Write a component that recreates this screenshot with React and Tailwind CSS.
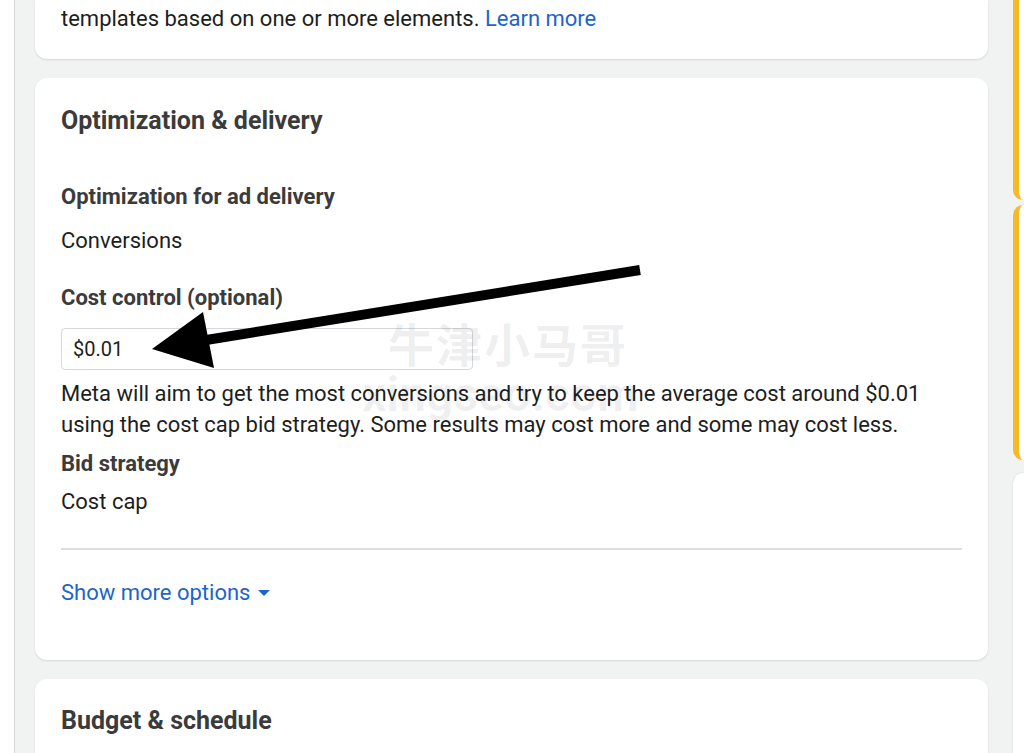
import React from "react";

const font = { fontFamily: "Roboto, 'Noto Sans CJK SC', sans-serif" };

export default function App() {
  return (
    <div className="relative h-[753px] w-[1024px] overflow-hidden bg-[#f1f2f2] flex" style={font}>
      {/* left strip */}
      <div className="w-[15px] shrink-0 bg-white border-r border-[#d7d9dc]" />

      {/* main column */}
      <div className="w-[973px] shrink-0 pl-[20px] flex flex-col gap-[19px]">
        {/* card 1 (top cut) */}
        <div className="bg-white rounded-b-[12px] shadow-[0_1px_2px_rgba(0,0,0,0.12)] pl-[26px] pt-[4px] h-[59px] shrink-0">
          <p className="text-[22px] leading-[30px] text-[#1c1e21]">
            templates based on one or more elements. <span className="text-[#1d65c9]">Learn more</span>
          </p>
        </div>

        {/* card 2 */}
        <div className="bg-white rounded-[12px] shadow-[0_1px_2px_rgba(0,0,0,0.12)] pl-[26px] pr-[26px] pt-[28px] h-[582px] shrink-0 flex flex-col">
          <h2 className="text-[25px] leading-[30px] font-bold text-[#3b3b3b]">Optimization &amp; delivery</h2>
          <h3 className="mt-[46px] text-[22px] leading-[30px] font-bold text-[#3b3b3b]">Optimization for ad delivery</h3>
          <p className="mt-[14px] text-[22px] leading-[30px] text-[#1c1e21]">Conversions</p>
          <h3 className="mt-[27px] text-[22px] leading-[30px] font-bold text-[#3b3b3b]">Cost control (optional)</h3>
          <div className="mt-[15px] w-[412px] h-[42px] border border-[#d4d7db] rounded-[4px] flex items-center px-[11px] text-[20px] text-[#1c1e21]">
            $0.01
          </div>
          <p className="mt-[8px] text-[22px] leading-[31px] text-[#1c1e21] whitespace-nowrap">
            Meta will aim to get the most conversions and try to keep the average cost around $0.01
            <br />
            using the cost cap bid strategy. Some results may cost more and some may cost less.
          </p>
          <h3 className="mt-[9px] text-[22px] leading-[30px] font-bold text-[#3b3b3b]">Bid strategy</h3>
          <p className="mt-[8px] text-[22px] leading-[30px] text-[#1c1e21]">Cost cap</p>
          <div className="mt-[31px] h-[2px] bg-[#dadde1]" />
          <div className="mt-[28px] flex items-center gap-[8px] text-[22px] leading-[30px] text-[#1d65c9]">
            <span>Show more options</span>
            <svg width="12" height="7" viewBox="0 0 12 7"><path d="M0 0 L12 0 L6 6 Z" fill="#1d65c9" /></svg>
          </div>
        </div>

        {/* card 3 */}
        <div className="bg-white rounded-t-[12px] shadow-[0_1px_2px_rgba(0,0,0,0.12)] pl-[26px] pt-[27px] h-[120px] shrink-0">
          <h2 className="text-[25px] leading-[30px] font-bold text-[#3b3b3b]">Budget &amp; schedule</h2>
        </div>
      </div>

      {/* right column */}
      <div className="ml-[25px] w-[60px] shrink-0 flex flex-col gap-[5px]">
        <div className="h-[200px] shrink-0 bg-white rounded-bl-[10px] border-l-[6px] border-[#f7b928]" />
        <div className="h-[255px] shrink-0 bg-white rounded-l-[10px] border-l-[6px] border-[#f7b928]" />
        <div className="mt-[8px] h-[300px] shrink-0 bg-white rounded-tl-[10px] shadow-[0_0_2px_rgba(0,0,0,0.15)]" />
      </div>

      {/* watermark */}
      <div className="absolute left-[388px] top-[314px] text-[46px] leading-[56px] font-bold text-[rgba(0,0,0,0.07)] tracking-[2px] pointer-events-none" style={{ fontFamily: "'Noto Sans CJK SC', sans-serif" }}>
        牛津小马哥
      </div>
      <div className="absolute left-[362px] top-[368px] text-[48px] leading-[54px] font-bold text-[rgba(0,0,0,0.06)] pointer-events-none">
        xingseo.com
      </div>

      {/* arrow */}
      <svg className="absolute left-0 top-0 pointer-events-none" width="1024" height="753">
        <line x1="640" y1="270" x2="200" y2="341" stroke="#000" strokeWidth="10" />
        <polygon points="152,349 203,312 214,368" fill="#000" />
      </svg>
    </div>
  );
}
